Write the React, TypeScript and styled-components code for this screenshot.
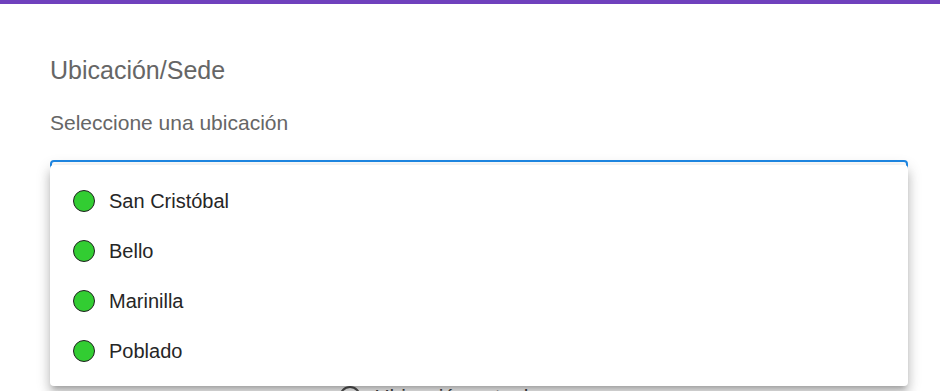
import React from 'react';
import styled, { createGlobalStyle } from 'styled-components';

const GlobalStyle = createGlobalStyle`
  html, body {
    margin: 0;
    padding: 0;
    background: #fff;
    overflow: hidden;
  }
  body {
    font-family: 'Liberation Sans', Arial, sans-serif;
  }
`;

const TopBar = styled.div`
  height: 4px;
  background: #6f41bd;
`;

const Content = styled.div`
  padding: 51px 32px 0 50px;
`;

const Title = styled.h2`
  margin: 0 0 25px;
  font-size: 25px;
  line-height: 30px;
  font-weight: 400;
  color: #666;
`;

const Label = styled.div`
  margin-bottom: 25px;
  font-size: 21px;
  line-height: 25px;
  color: #666;
`;

const Field = styled.div`
  position: relative;
`;

const SelectBox = styled.div`
  height: 56px;
  box-sizing: border-box;
  border: 2px solid #1e88e5;
  border-radius: 4px;
`;

const Menu = styled.ul`
  position: absolute;
  top: 5px;
  left: 0;
  right: 0;
  margin: 0;
  padding: 11px 0 10px;
  list-style: none;
  background: #fff;
  border-radius: 4px;
  box-shadow: 0 5px 5px -3px rgba(0, 0, 0, 0.2), 0 8px 10px 1px rgba(0, 0, 0, 0.14),
    0 3px 14px 2px rgba(0, 0, 0, 0.12);
  z-index: 2;
`;

const Item = styled.li`
  display: flex;
  align-items: center;
  height: 50px;
  padding-left: 23px;
  font-size: 20px;
  color: #262626;
  cursor: pointer;
`;

const Dot = styled.span<{ $color: string }>`
  width: 20px;
  height: 20px;
  margin-right: 14px;
  border-radius: 50%;
  border: 1px solid #1f1f1f;
  background: ${(p) => p.$color};
  flex-shrink: 0;
`;

const Actions = styled.div`
  display: flex;
  justify-content: center;
  margin-top: 169px;
`;

const LocateBtn = styled.button`
  display: flex;
  align-items: center;
  gap: 13px;
  padding: 0;
  border: none;
  background: none;
  font-family: inherit;
  font-size: 21px;
  color: #444;
  margin-right: 90px;
`;

const Ring = styled.span`
  width: 18px;
  height: 18px;
  border: 2px solid #555;
  border-radius: 50%;
`;

const sedes = ['San Cristóbal', 'Bello', 'Marinilla', 'Poblado'];

export default function App() {
  return (
    <>
      <GlobalStyle />
      <TopBar />
      <Content>
        <Title>Ubicación/Sede</Title>
        <Label>Seleccione una ubicación</Label>
        <Field>
          <SelectBox />
          <Menu>
            {sedes.map((s) => (
              <Item key={s}>
                <Dot $color='#32cd32' />
                {s}
              </Item>
            ))}
          </Menu>
        </Field>
        <Actions>
          <LocateBtn>
            <Ring />
            Ubicación actual
          </LocateBtn>
        </Actions>
      </Content>
    </>
  );
}
